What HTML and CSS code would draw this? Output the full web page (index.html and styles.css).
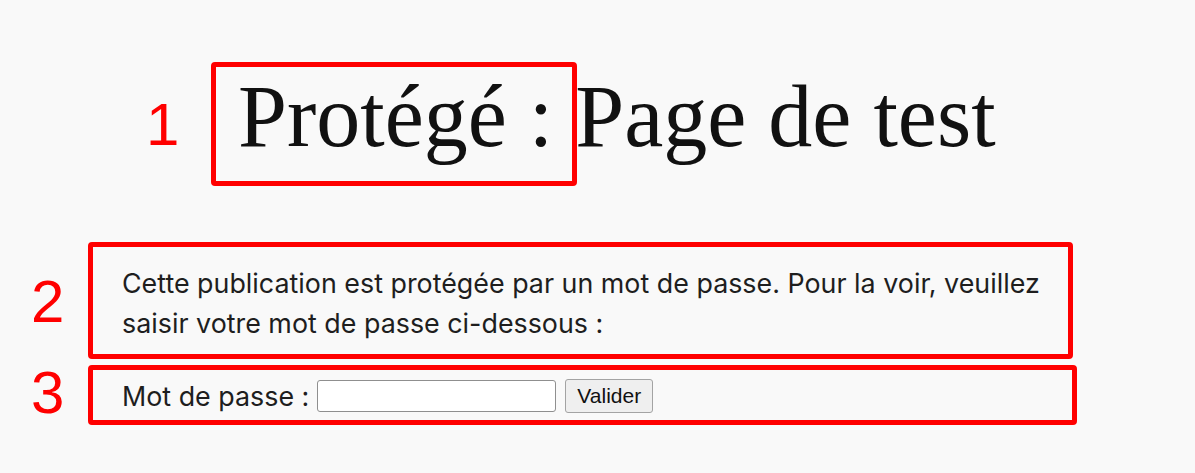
FILE: index.html
```html
<!DOCTYPE html>
<html lang="fr">
<head>
<meta charset="utf-8">
<title>Protégé : Page de test</title>
<link rel="stylesheet" href="styles.css">
</head>
<body>
<main class="page">
  <h1 class="title">Protégé : Page de test</h1>
  <form class="post-password-form">
    <p class="intro">Cette publication est protégée par un mot de passe. Pour la voir, veuillez saisir votre mot de passe ci-dessous :</p>
    <p class="row"><label class="pw-label">Mot de passe : <input class="pw-input" type="password" name="post_password"></label><input class="pw-submit" type="submit" value="Valider"></p>
  </form>

  <div class="mark mark-1"></div>
  <div class="mark mark-2"></div>
  <div class="mark mark-3"></div>
  <span class="num num-1">1</span>
  <span class="num num-2">2</span>
  <span class="num num-3">3</span>
</main>
</body>
</html>
```
FILE: styles.css
```css
html, body {
  margin: 0;
  padding: 0;
  background: #f9f9f9;
}
body {
  font-family: Inter, "Noto Sans", sans-serif;
  color: #1e1e1e;
  width: 1195px;
  height: 473px;
  overflow: hidden;
}
.page {
  position: relative;
  height: 473px;
  padding: 0 0 0 122px;
  box-sizing: border-box;
}
.title {
  margin: 0;
  padding: 62px 0 0 116px;
  font-family: "Liberation Serif", "DejaVu Serif", serif;
  font-weight: 400;
  font-size: 88px;
  line-height: 110px;
  color: #111;
  letter-spacing: 0;
  white-space: nowrap;
}
.post-password-form {
  margin-top: 91px;
}
.intro {
  margin: 0;
  width: 945px;
  font-size: 26.85px;
  line-height: 40px;
}
.row {
  margin: 36px 0 0;
  font-size: 26.85px;
  line-height: 34px;
  display: flex;
  align-items: center;
  gap: 9px;
}
.pw-label {
  display: flex;
  align-items: center;
  gap: 8px;
}
.pw-input {
  width: 239px;
  height: 32px;
  box-sizing: border-box;
  border: 1px solid #8f8f8f;
  border-radius: 3px;
  background: #fff;
  margin: 0;
}
.pw-submit {
  height: 34px;
  padding: 0 11px;
  font-family: "Liberation Sans", Arial, sans-serif;
  font-size: 21px;
  color: #111;
  background: #efefef;
  border: 1px solid #a3a3a3;
  border-radius: 3px;
  margin: 0;
}
.mark {
  position: absolute;
  border: 5px solid #ff0000;
  border-radius: 4px;
  box-sizing: border-box;
}
.mark-1 { left: 211px; top: 62px; width: 366px; height: 124px; }
.mark-2 { left: 88px; top: 242px; width: 985px; height: 117px; }
.mark-3 { left: 88px; top: 365px; width: 989px; height: 60px; }
.num {
  position: absolute;
  font-family: "Liberation Sans", Arial, sans-serif;
  font-size: 60px;
  line-height: 1;
  color: #ff0000;
}
.num-1 { left: 146px; top: 95px; }
.num-2 { left: 31px; top: 272px; }
.num-3 { left: 31px; top: 363px; }
```
